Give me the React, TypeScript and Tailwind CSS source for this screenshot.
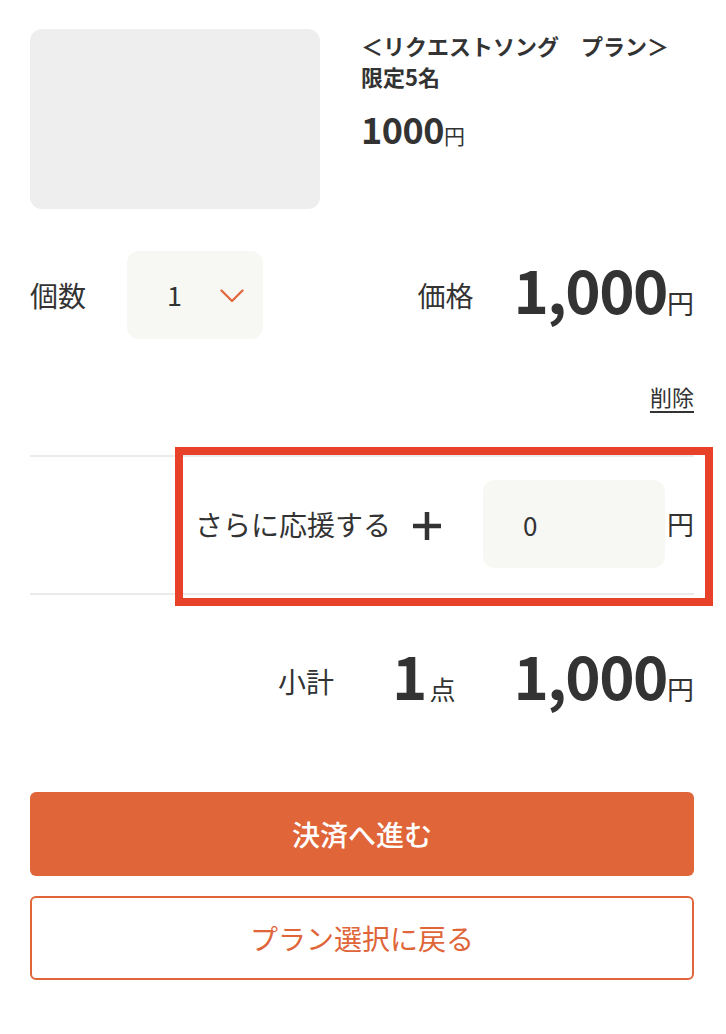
const ORANGE = '#e06539'

function Chevron() {
  return (
    <svg width="24" height="14" viewBox="0 0 24 14" fill="none">
      <path d="M1.5 1.5 L12 12 L22.5 1.5" stroke={ORANGE} strokeWidth={2.2} strokeLinecap="round" strokeLinejoin="round" />
    </svg>
  )
}

function Plus() {
  return (
    <svg width="30" height="30" viewBox="0 0 30 30" fill="none">
      <path d="M15 1 V29 M1 15 H29" stroke="#333333" strokeWidth={4.5} />
    </svg>
  )
}

export default function App() {
  return (
    <div
      className="relative w-[726px] min-h-[1034px] bg-white pl-[30px] pr-[32px] pt-[29px] text-[#333333]"
      style={{ fontFamily: '"Noto Sans CJK JP", "Noto Sans", sans-serif' }}
    >
      {/* product */}
      <div className="flex gap-[41px]">
        <div className="h-[180px] w-[290px] shrink-0 rounded-[12px] bg-[#eeeeee]" />
        <div className="mt-[1px]">
          <p className="text-[22px] font-bold leading-[31px]">＜リクエストソング　プラン＞<br />限定5名</p>
          <p className="mt-[16px] flex items-baseline leading-[40px]">
            <span className="text-[36px] font-bold tracking-[-0.5px]">1000</span>
            <span className="text-[21px]">円</span>
          </p>
        </div>
      </div>

      {/* quantity / price */}
      <div className="mt-[42px] flex h-[88px] items-center">
        <span className="text-[28px]">個数</span>
        <div className="ml-[41px] flex h-[88px] w-[136px] items-center rounded-[12px] bg-[#f7f7f3] pl-[40px]">
          <span className="text-[27px]">1</span>
          <span className="ml-[38px] mt-[2px]"><Chevron /></span>
        </div>
        <span className="ml-auto text-[28px]">価格</span>
        <div className="ml-[40px] flex items-baseline pb-[15px] leading-none">
          <span className="text-[60px] font-bold tracking-[-1.5px]">1,000</span>
          <span className="text-[27px]">円</span>
        </div>
      </div>

      <div className="mt-[41px] flex justify-end">
        <button className="text-[22px] leading-[32px] underline underline-offset-[5px] decoration-[2px]">削除</button>
      </div>

      {/* support */}
      <div className="mt-[43px] h-[2px] bg-[#ebebeb]" />
      <div className="flex items-center justify-end pb-[25px] pt-[23px]">
        <span className="text-[28px]">さらに応援する</span>
        <span className="ml-[21px] mt-[3px]"><Plus /></span>
        <div className="ml-[41px] flex h-[88px] w-[182px] items-center rounded-[12px] bg-[#f7f7f3] pl-[40px] text-[26px]">0</div>
        <span className="ml-[2px] text-[27px]">円</span>
      </div>
      <div className="h-[2px] bg-[#ebebeb]" />

      {/* subtotal */}
      <div className="mt-[42px] flex h-[88px] items-center justify-end">
        <span className="text-[28px]">小計</span>
        <div className="ml-[58px] flex items-baseline pb-[15px] leading-none">
          <span className="text-[60px] font-bold">1</span>
          <span className="ml-[2px] text-[26px]">点</span>
        </div>
        <div className="ml-[58px] flex items-baseline pb-[15px] leading-none">
          <span className="text-[60px] font-bold tracking-[-1.5px]">1,000</span>
          <span className="text-[27px]">円</span>
        </div>
      </div>

      {/* buttons */}
      <button className="mt-[67px] flex h-[84px] w-full items-center justify-center rounded-[6px] bg-[#e06539] text-[28px] font-medium text-white">
        決済へ進む
      </button>
      <button className="mt-[20px] flex h-[84px] w-full items-center justify-center rounded-[6px] border-2 border-[#e06539] bg-white text-[28px] text-[#e06539]">
        プラン選択に戻る
      </button>

      {/* highlight annotation */}
      <div className="pointer-events-none absolute left-[175px] top-[447px] h-[159px] w-[538px] border-[8px] border-[#e8412a]" />
    </div>
  )
}
